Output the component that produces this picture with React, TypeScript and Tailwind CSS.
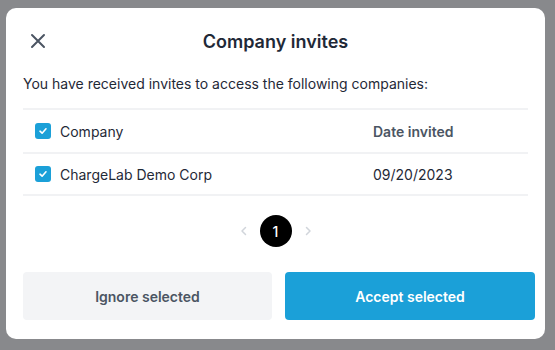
import React from 'react';

const CheckBox: React.FC = () => (
    <span className="flex items-center justify-center w-4 h-4 rounded-[3px] bg-[#1ba0d8]">
        <svg width="10" height="10" viewBox="0 0 10 10" fill="none">
            <path d="M2 5.2 L4.1 7.2 L8 2.8" stroke="white" strokeWidth="1.6" strokeLinecap="round" strokeLinejoin="round" />
        </svg>
    </span>
);

const App: React.FC = () => {
    const rows = [{ company: 'ChargeLab Demo Corp', date: '09/20/2023' }];

    return (
        <div className="w-[555px] h-[350px] bg-[#88898c] pl-[6px] pt-[8px] overflow-hidden" style={{ fontFamily: 'Inter, "Noto Sans", sans-serif' }}>
            <div className="w-[539px] h-[331px] bg-white rounded-[10px] pt-[17px] pl-[17px] pr-[10px] flex flex-col">
                <div className="relative h-8 w-[505px] flex items-center justify-center">
                    <button className="absolute left-[6px] top-[7px] text-[#4b5563]">
                        <svg width="18" height="18" viewBox="0 0 18 18" fill="none">
                            <path d="M3 3 L15 15 M15 3 L3 15" stroke="currentColor" strokeWidth="2" strokeLinecap="round" />
                        </svg>
                    </button>
                    <h1 className="text-[18px] font-semibold text-[#1f2937]">Company invites</h1>
                </div>

                <p className="mt-[17px] text-[14px] text-[#1f2937] leading-5">You have received invites to access the following companies:</p>

                <div className="mt-[14px] w-[505px] border-t-2 border-[#f1f2f4]">
                    <div className="flex items-center h-[44px] border-b-2 border-[#f1f2f4] text-[14px]">
                        <div className="flex items-center gap-[9px] pl-[12px] w-[350px]">
                            <CheckBox />
                            <span className="text-[#1f2937]">Company</span>
                        </div>
                        <span className="font-semibold text-[#4b5563]">Date invited</span>
                    </div>
                    {rows.map((row, i) => (
                        <div key={i} className="flex items-center h-[42px] border-b-2 border-[#f1f2f4] text-[14px] text-[#1f2937]">
                            <div className="flex items-center gap-[9px] pl-[12px] w-[350px]">
                                <CheckBox />
                                <span>{row.company}</span>
                            </div>
                            <span>{row.date}</span>
                        </div>
                    ))}
                </div>

                <div className="mt-[19px] w-[505px] flex items-center justify-center gap-[10px]">
                    <svg width="12" height="12" viewBox="0 0 12 12" fill="none">
                        <path d="M7.5 2.5 L4 6 L7.5 9.5" stroke="#d1d5db" strokeWidth="1.5" strokeLinecap="round" strokeLinejoin="round" />
                    </svg>
                    <span className="w-8 h-8 rounded-full bg-black text-white text-[14px] font-medium flex items-center justify-center">1</span>
                    <svg width="12" height="12" viewBox="0 0 12 12" fill="none">
                        <path d="M4.5 2.5 L8 6 L4.5 9.5" stroke="#d1d5db" strokeWidth="1.5" strokeLinecap="round" strokeLinejoin="round" />
                    </svg>
                </div>

                <div className="mt-[25px] flex gap-[13px]">
                    <button className="w-[249px] h-[48px] rounded-[4px] bg-[#f3f4f6] text-[#4b5563] text-[14px] font-semibold">Ignore selected</button>
                    <button className="w-[250px] h-[48px] rounded-[4px] bg-[#1ba0d8] text-white text-[14px] font-semibold">Accept selected</button>
                </div>
            </div>
        </div>
    );
};

export default App;
